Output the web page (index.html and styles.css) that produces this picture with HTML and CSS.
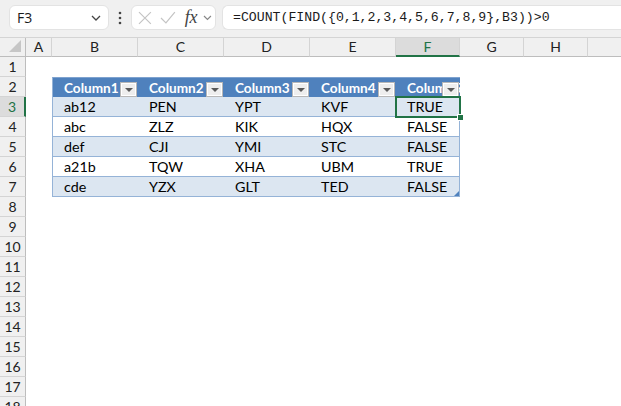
FILE: index.html
```html
<!DOCTYPE html>
<html>
<head>
<meta charset="utf-8">
<link rel="stylesheet" href="styles.css">
</head>
<body>
<div class="app">
  <div class="toolbar">
    <div class="namebox">
      <span class="name">F3</span>
      <svg class="chev" width="10" height="6" viewBox="0 0 10 6"><polyline points="1,1 5,5 9,1" fill="none" stroke="#444" stroke-width="1.3"/></svg>
    </div>
    <svg class="dots" width="4" height="14" viewBox="0 0 4 14"><circle cx="2" cy="2" r="1.3" fill="#444"/><circle cx="2" cy="7" r="1.3" fill="#444"/><circle cx="2" cy="12" r="1.3" fill="#444"/></svg>
    <div class="fxbox">
      <svg class="ico" width="14" height="14" viewBox="0 0 14 14"><path d="M1 1 L13 13 M13 1 L1 13" stroke="#c4c4c4" stroke-width="1.2" fill="none"/></svg>
      <svg class="ico" width="16" height="14" viewBox="0 0 16 14"><polyline points="1,7 6,12 15,1" fill="none" stroke="#c4c4c4" stroke-width="1.2"/></svg>
      <span class="fx">fx</span>
      <svg class="chev2" width="9" height="6" viewBox="0 0 9 6"><polyline points="1,1 4.5,4.5 8,1" fill="none" stroke="#888" stroke-width="1.2"/></svg>
    </div>
    <div class="formula">=COUNT(FIND({0,1,2,3,4,5,6,7,8,9},B3))&gt;0</div>
  </div>
  <div class="sheet">
    <div class="corner"><svg width="13" height="13" viewBox="0 0 13 13"><polygon points="12,0 12,12 0,12" fill="#c6c6c6"/></svg></div>
    <div class="colhead">A</div>
    <div class="colhead">B</div>
    <div class="colhead">C</div>
    <div class="colhead">D</div>
    <div class="colhead">E</div>
    <div class="colhead sel">F</div>
    <div class="colhead">G</div>
    <div class="colhead">H</div>
    <div class="colhead last"></div>

    <div class="rowhead">1</div>
    <div class="rowhead">2</div>
    <div class="rowhead sel">3</div>
    <div class="rowhead">4</div>
    <div class="rowhead">5</div>
    <div class="rowhead">6</div>
    <div class="rowhead">7</div>
    <div class="rowhead">8</div>
    <div class="rowhead">9</div>
    <div class="rowhead">10</div>
    <div class="rowhead">11</div>
    <div class="rowhead">12</div>
    <div class="rowhead">13</div>
    <div class="rowhead">14</div>
    <div class="rowhead">15</div>
    <div class="rowhead">16</div>
    <div class="rowhead">17</div>
    <div class="rowhead">18</div>

    <div class="table">
      <div class="th">Column1<span class="dd"></span></div>
      <div class="th">Column2<span class="dd"></span></div>
      <div class="th">Column3<span class="dd"></span></div>
      <div class="th">Column4<span class="dd"></span></div>
      <div class="th">Column5<span class="dd"></span></div>

      <div class="td band first">ab12</div><div class="td band">PEN</div><div class="td band">YPT</div><div class="td band">KVF</div><div class="td band end">TRUE</div>
      <div class="td first">abc</div><div class="td">ZLZ</div><div class="td">KIK</div><div class="td">HQX</div><div class="td end">FALSE</div>
      <div class="td band first">def</div><div class="td band">CJI</div><div class="td band">YMI</div><div class="td band">STC</div><div class="td band end">FALSE</div>
      <div class="td first">a21b</div><div class="td">TQW</div><div class="td">XHA</div><div class="td">UBM</div><div class="td end">TRUE</div>
      <div class="td band first">cde</div><div class="td band">YZX</div><div class="td band">GLT</div><div class="td band">TED</div><div class="td band end">FALSE</div>

      <div class="active"><span class="handle"></span></div>
      <span class="resize"></span>
    </div>
  </div>
</div>
</body>
</html>
```

FILE: styles.css
```css
* { box-sizing: border-box; }
html, body { margin: 0; padding: 0; }
body { background: #ffffff; font-family: "Lato", "Liberation Sans", sans-serif; }

.app { width: 621px; height: 406px; overflow: hidden; background: #ffffff; }

.toolbar {
  height: 38px;
  background: #f0f0f0;
  border-bottom: 1px solid #d4d4d4;
  display: flex;
  align-items: flex-start;
  padding: 5px 0 0 9px;
}
.namebox {
  width: 100px; height: 25px;
  background: #fff;
  border: 1px solid #e3e3e3;
  border-radius: 6px;
  display: flex; align-items: center; justify-content: space-between;
  padding: 0 7px 0 7px;
}
.name { font-family: "Open Sans", "Noto Sans", sans-serif; font-size: 14px; color: #1a1a1a; }
.dots { margin: 6px 0 0 9px; }
.fxbox {
  margin-left: 9px;
  width: 85px; height: 25px;
  background: #fff;
  border: 1px solid #e3e3e3;
  border-radius: 6px;
  display: flex; align-items: center;
  padding: 0 3px 0 6px;
  gap: 8px;
}
.fx { font-family: "Liberation Serif", serif; font-style: italic; font-size: 18px; color: #444; margin-left: 1px; letter-spacing: -0.3px; }
.chev2 { margin-left: -2px; }
.formula {
  margin-left: 6px;
  flex: 1;
  height: 25px;
  background: #fff;
  border: 1px solid #e3e3e3;
  border-right: none;
  border-radius: 6px 0 0 6px;
  font-family: "Liberation Mono", "DejaVu Sans Mono", monospace;
  font-size: 13.2px;
  color: #1a1a1a;
  line-height: 23px;
  padding-left: 10px;
  white-space: nowrap;
}

.sheet {
  display: grid;
  grid-template-columns: 26px 26px 86px 86px 86px 86px 64px 64px 64px 1fr;
  grid-template-rows: 19px repeat(18, 20px);
}
.corner {
  background: #f0f0f0;
  border-right: 1px solid #bdbdbd;
  border-bottom: 1px solid #bdbdbd;
  display: flex; align-items: flex-end; justify-content: flex-end;
  padding: 0 3px 3px 0;
}
.colhead {
  background: #f0f0f0;
  border-right: 1px solid #d4d4d4;
  border-bottom: 1px solid #bdbdbd;
  font-size: 14px;
  color: #222;
  text-align: center;
  line-height: 18px;
}
.colhead.sel { background: #dcdcdc; color: #217346; border-bottom: 2px solid #217346; }
.colhead.last { border-right: none; }
.rowhead {
  grid-column: 1;
  background: #f0f0f0;
  border-right: 1px solid #bdbdbd;
  border-bottom: 1px solid #d4d4d4;
  font-size: 14px;
  color: #222;
  text-align: center;
  line-height: 19px;
}
.rowhead.sel { background: #dcdcdc; color: #217346; border-right: 2px solid #217346; }

.table {
  grid-column: 3 / 8;
  grid-row: 3 / 9;
  position: relative;
  display: grid;
  grid-template-columns: 86px 86px 86px 86px 64px;
  grid-auto-rows: 20px;
  font-size: 14.3px;
}
.th {
  position: relative;
  overflow: hidden;
  background: #4f81bd;
  color: #fff;
  font-weight: bold;
  font-size: 13.6px;
  padding-left: 11px;
  line-height: 20px;
  white-space: nowrap;
  border-top: 1px solid #7ea2cf;
}
.dd {
  position: absolute;
  right: 2px; top: 5px;
  width: 15px; height: 13px;
  background: #eeeeee;
  border: 1px solid #ffffff;
  outline: 1px solid #b7b7b7;
}
.dd::after {
  content: "";
  position: absolute;
  left: 3px; top: 4px;
  border-left: 4px solid transparent;
  border-right: 4px solid transparent;
  border-top: 4px solid #595959;
}
.td {
  background: #ffffff;
  color: #000;
  padding-left: 11px;
  line-height: 19px;
  border-bottom: 1px solid #95b3d7;
  white-space: nowrap;
}
.td.band { background: #dce6f1; }
.td.first { border-left: 1px solid #95b3d7; }
.td.end { border-right: 1px solid #95b3d7; }
.th:first-child { border-left: 1px solid #95b3d7; }

.active {
  position: absolute;
  left: 343px; top: 19px;
  width: 66px; height: 22px;
  border: 2px solid #217346;
}
.handle {
  position: absolute;
  right: -5px; bottom: -5px;
  width: 7px; height: 7px;
  background: #217346;
  border: 1px solid #fff;
}
.resize {
  position: absolute;
  right: 1px; bottom: 1px;
  width: 0; height: 0;
  border-left: 5px solid transparent;
  border-bottom: 5px solid #4f81bd;
}
```
